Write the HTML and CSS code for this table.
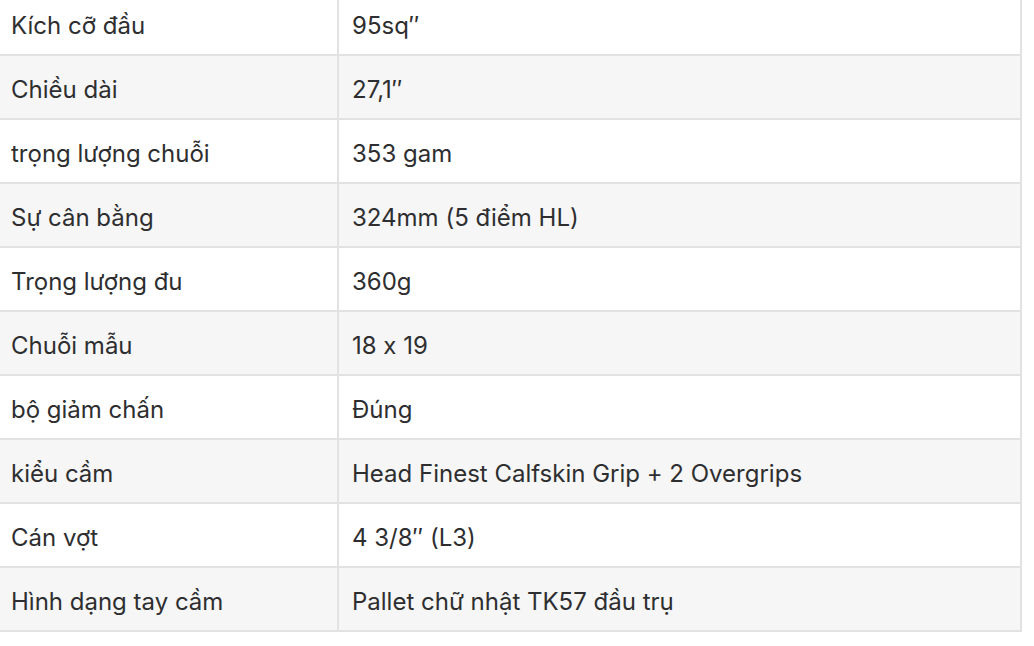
FILE: index.html
```html
<!DOCTYPE html>
<html lang="vi">
<head>
<meta charset="utf-8">
<link rel="stylesheet" href="styles.css">
</head>
<body>
<table class="specs">
  <colgroup><col class="c1"><col class="c2"></colgroup>
  <tbody>
    <tr><td>Kích cỡ đầu</td><td>95sq″</td></tr>
    <tr><td>Chiều dài</td><td>27,1″</td></tr>
    <tr><td>trọng lượng chuỗi</td><td>353 gam</td></tr>
    <tr><td>Sự cân bằng</td><td>324mm (5 điểm HL)</td></tr>
    <tr><td>Trọng lượng đu</td><td>360g</td></tr>
    <tr><td>Chuỗi mẫu</td><td>18 x 19</td></tr>
    <tr><td>bộ giảm chấn</td><td>Đúng</td></tr>
    <tr><td>kiểu cầm</td><td>Head Finest Calfskin Grip + 2 Overgrips</td></tr>
    <tr><td>Cán vợt</td><td>4 3/8″ (L3)</td></tr>
    <tr><td>Hình dạng tay cầm</td><td>Pallet chữ nhật TK57 đầu trụ</td></tr>
  </tbody>
</table>
</body>
</html>
```
FILE: styles.css
```css
html, body {
  margin: 0;
  padding: 0;
  background: #ffffff;
}
body {
  overflow: hidden;
}
.specs {
  border-collapse: collapse;
  table-layout: fixed;
  width: 1026px;
  margin: -10px 0 0 -4px;
  font-family: Inter, "Noto Sans", "Liberation Sans", sans-serif;
  font-size: 24px;
  font-feature-settings: "calt" 0;
  color: #2e2e30;
}
.c1 { width: 341px; }
.specs td {
  border: 2px solid #e2e2e2;
  height: 64px;
  box-sizing: border-box;
  padding: 5px 13px 0;
  line-height: 30px;
  vertical-align: middle;
}
.specs tr:nth-child(even) td {
  background: #f6f6f6;
}
```
